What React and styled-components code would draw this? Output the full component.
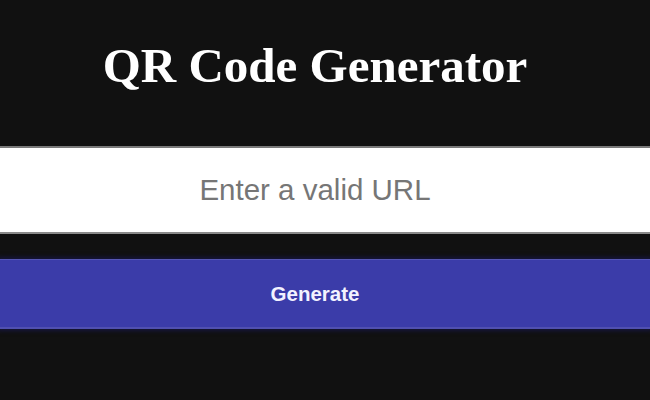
import React, { useState } from "react";
import styled, { createGlobalStyle } from "styled-components";

const GlobalStyle = createGlobalStyle`
  html, body {
    margin: 0;
    padding: 0;
    background: #111111;
  }
  body {
    font-family: "Liberation Sans", Arial, sans-serif;
  }
`;

const Page = styled.main`
  display: flex;
  flex-direction: column;
  width: 100%;
  min-height: 400px;
  background: #111111;
`;

const Title = styled.h1`
  margin: 38px 0 52px;
  padding-right: 20px;
  text-align: center;
  font-family: "Liberation Serif", "Times New Roman", serif;
  font-size: 49px;
  font-weight: 700;
  line-height: 56px;
  color: #ffffff;
`;

const UrlInput = styled.input`
  box-sizing: border-box;
  display: block;
  width: 100%;
  height: 88px;
  margin: 0;
  padding: 0 20px 0 0;
  border: none;
  border-top: 2px solid #7a7a7a;
  border-bottom: 2px solid #8a8a8a;
  background: #ffffff;
  text-align: center;
  font-family: "Liberation Sans", Arial, sans-serif;
  font-size: 29.5px;
  color: #222222;
  outline: none;

  &::placeholder {
    color: #767676;
  }
`;

const GenerateButton = styled.button`
  box-sizing: border-box;
  display: block;
  width: 100%;
  height: 70px;
  margin: 25px 0 0;
  padding: 0 20px 0 0;
  border: none;
  border-top: 1px solid #5656b4;
  border-bottom: 2px solid #5050b0;
  background: #3b3ca9;
  box-shadow: 0 0 4px 2px rgba(25, 25, 95, 0.55);
  color: #f2f2ff;
  font-family: "Liberation Sans", Arial, sans-serif;
  font-size: 20.5px;
  font-weight: 700;
  cursor: pointer;
`;

export default function App() {
  const [url, setUrl] = useState("");
  return (
    <>
      <GlobalStyle />
      <Page>
        <Title>QR Code Generator</Title>
        <UrlInput
          type="text"
          placeholder="Enter a valid URL"
          value={url}
          onChange={(e) => setUrl(e.target.value)}
        />
        <GenerateButton type="button">Generate</GenerateButton>
      </Page>
    </>
  );
}
